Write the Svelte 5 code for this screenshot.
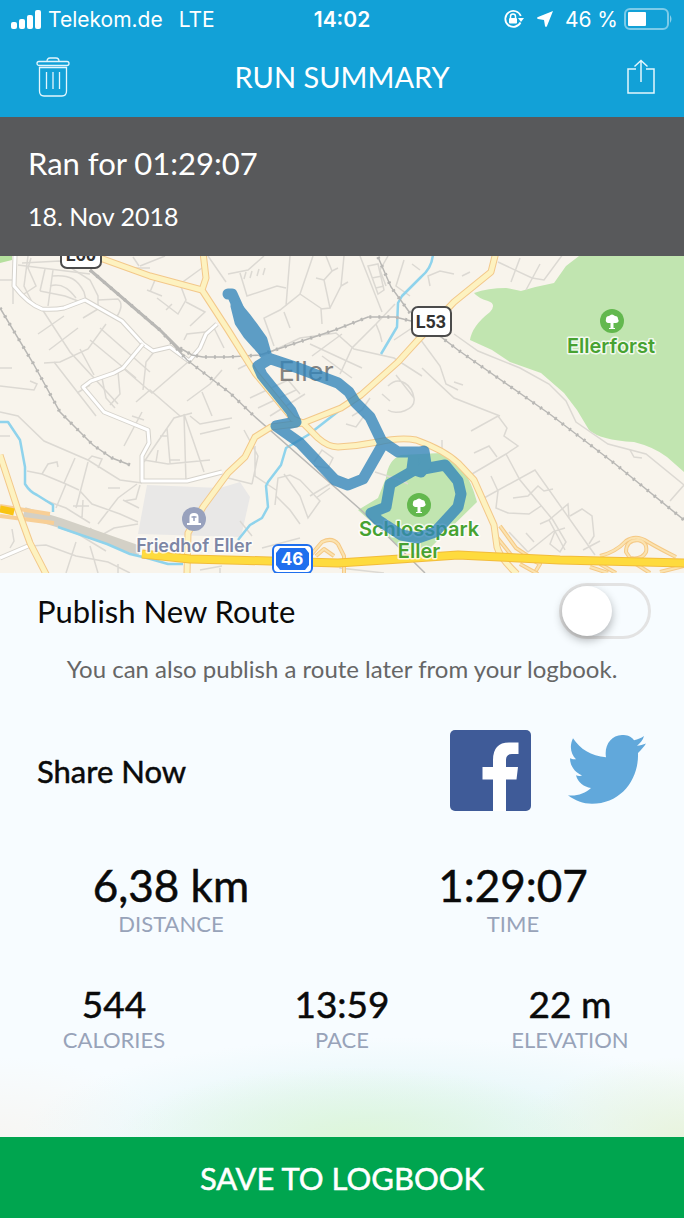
<script>
  let publishRoute = $state(false);

  const mainStats = [
    { value: '6,38 km', label: 'Distance' },
    { value: '1:29:07', label: 'Time' }
  ];

  const detailStats = [
    { value: '544', label: 'Calories' },
    { value: '13:59', label: 'Pace' },
    { value: '22 m', label: 'Elevation' }
  ];

  const streets = [
    // north west
    'M28 0L24 30L34 50M0 24H14M13 30V48M18 9L90 18M31 2L28 12L36 30L24 38M45 13L40 35M53 14L48 50M40 35L65 40L78 45',
    'M52 20C70 18 78 24 84 36L86 44M50 30C62 26 70 34 76 42M22 7L60 5L90 24L98 40V53L83 62M98 44L118 43C124 48 120 56 116 62',
    'M42 53L70 96L118 148M64 60L38 78M78 72L49 94M106 68L88 93L60 106L44 107M100 72L150 116M90 84L136 122M80 93L94 119',
    'M54 106L96 160M0 112H12M0 130L34 134L37 128L30 125M77 137L90 129M102 122L106 142L115 152M118 116L120 138L110 149',
    'M123 112L152 137L188 106M136 146L150 134L180 160M154 96L146 106L143 134M187 145L210 128L222 114M202 136L212 160',
    'M139 10L133 1M150 12L134 12M155 24L150 36M147 34L162 40M157 42L178 58L186 44L180 28L202 12M172 48L166 54M186 46L205 56L190 70',
    'M217 68L205 76L187 78L184 84M214 72L224 92M208 0L226 26M165 0L140 10',
    // centre
    'M228 18L248 14L264 0M240 17L247 40L277 30L286 32M246 16L244 23M252 15L250 22M259 13L257 20M265 12L263 19M290 0L286 50M313 0L300 38L280 54L264 62L274 90',
    'M326 0L332 15L324 24L330 52L321 53L322 68M344 0L341 30L330 52M300 38L322 53M332 15L338 12M324 24L316 22M341 30L348 26M284 56L290 72',
    'M360 0L382 56M368 10L378 8L384 34L378 38ZM372 22L382 20M376 32L384 30M388 0L380 14L386 30M404 4L396 30L410 40M412 8L420 14M430 30L428 20L440 15L454 18M395 48L376 68L352 92L340 118M376 68L380 78L382 86',
    'M262 100L300 82L336 77L354 93L394 102L422 120M310 88L362 112M322 100L352 122M342 78L312 100M422 112L454 142L500 160M394 84L412 72L440 110L446 128L458 134',
    'M250 142L288 124L300 138M258 152L296 134M270 160L305 138M396 119L414 142M388 130C400 118 412 130 414 142S396 160 388 154M382 138L390 145M370 142L362 154L352 160M238 113L250 107',
    // west and south west
    'M0 156L18 160L44 185L88 204L120 224L142 227M0 180H10M88 204L92 200L102 203L98 212M27 215L42 218L66 228L79 234M42 218L48 208L57 206L58 211M66 228L56 252M75 202L64 227M88 206L76 252',
    'M80 235L92 248L120 258L138 266M44 244L66 252L90 267M98 268L118 242L137 228M108 232L120 232M123 244L139 252M140 229L136 243L124 245M73 250H89M90 272L100 280L114 272L138 268M82 262L83 244',
    'M142 156L124 190M132 160L144 164M167 172L170 207M160 180H168M158 194L156 206M144 204L168 208L210 204M170 204H180M184 158L204 216M190 160L200 168L232 162M200 178L230 171M184 158L186 226M144 206L152 194L174 162L192 157',
    'M76 286L66 317M90 290L98 317M12 273L14 285L10 292M0 302L30 288M30 290L46 289L76 300L108 306L130 317M118 308V317M200 314L222 310M60 272L78 278L106 295M220 312V317',
    // south
    'M275 249L278 222L290 219L300 224L320 245L308 262L300 240L284 218M276 240L290 254L300 268M316 242L330 232M255 190V220L276 234M228 222L252 228M244 174L258 200L252 228M314 206L322 194L333 202L328 212L314 210M346 168L356 171L364 160M375 216L400 224L408 228M442 196V184',
    'M262 292L300 282M240 265L252 280M310 240L330 228M340 305V312L384 317',
    // east
    'M471 175L498 160L507 172L504 180L518 190L506 198L472 218M474 197L489 190L497 201M506 198L520 224L553 264L566 286L560 296L550 288L555 275L565 272M484 242L535 214L595 299M491 220L498 235L496 252L508 257L529 258L541 250',
    'M513 242L528 240L538 230L544 235L553 233M549 264L568 248L569 262M570 260L582 253L592 260L594 280L589 288M526 277L534 286M528 296L554 275M540 268L549 264L565 294M509 276L528 296M583 294L600 285',
    'M498 6L532 22L544 24L566 -6M520 2L511 26M540 8L526 34M454 78L478 95L520 112L549 128L566 145L576 166L608 188L646 198L684 229L670 245M630 194L634 201L642 202M470 16L462 20M454 126L463 129'
  ];

  const mainStreets = [
    'M15 0L14 30Q28 48 42 53Q54 54 64 52L85 44L122 65L143 88L153 95L170 91L189 105L200 92L206 78L217 68',
    'M143 88L123 112L114 117L91 125L83 131L104 156L148 174L149 187L142 200V225H187L222 216',
    'M0 302L28 290'
  ];

  const arterials = [
    'M100 2L150 20L202 34',
    'M203 -4L206 22L202 34L228 74L255 117L293 163L303 167L318 182Q328 191 338 191Q358 190 378 186Q401 181 416 184Q444 194 458 207L474 224L494 269L497 291Q500 302 517 318',
    'M496 -4L491 16L454 46L418 84L398 106L361 139L341 152L303 167L271 171L255 181L245 201L228 217L203 251L188 277L187 318',
    'M0 199L18 254L30 287L47 320'
  ];

  const ramps = [
    'M310 300L322 286Q332 281 338 288L344 300V318M316 300L324 293L334 300M500 270L516 292L528 300M496 280L512 300M530 303L540 308L534 318',
    'M600 300Q616 296 626 285Q636 278 648 286Q658 292 676 301M626 296Q626 284 638 284Q648 286 646 296Q642 304 630 302ZM590 311L608 317M600 308L616 317M636 308L650 317M684 310L660 316M520 308L538 318'
  ];

  const rivers = [
    'M0 166H8L20 184L25 211V228Q30 236 37 239L53 249V256M58 271L107 288L130 298L147 302L168 308H183',
    'M433 -2Q432 12 421 21L402 40L398 47L397 71L381 98M340 154L308 179L286 192L281 209L268 226L266 230L268 251L262 262L250 269L238 284'
  ];

  const railways = [
    'M90 14L160 74L187 104L230 137L253 159',
    'M180 92L192 99L203 101H228L260 99L335 74L368 61H395L415 66L441 81L458 94L551 159L614 207L684 264',
    'M378 1L391 31L410 57',
    'M0 52L33 107L60 156L93 189L112 202L130 209'
  ];
</script>

<svelte:head>
  <title>Run Summary</title>
</svelte:head>

{#snippet stat(item)}
  <div class="stat">
    <dt>{item.label}</dt>
    <dd>{item.value}</dd>
  </div>
{/snippet}

{#snippet tree(x, y)}
  <g transform="translate({x} {y})">
    <circle r="12" fill="#63b84e" />
    <path d="M-1.500 7V2L-4 2Q-7 1-6-2Q-6-5-3-5Q0-8 3-5Q6-5 6-2Q8 1 4 2L1.500 2V7H3V8H-3V7Z" fill="#fff" />
  </g>
{/snippet}

<div class="screen">
  <header class="top">
    <div class="status">
      <div class="status-left">
        <svg class="signal" viewBox="0 0 31 19" aria-hidden="true">
          <rect x="0" y="12" width="6" height="7" rx="2" />
          <rect x="8" y="9" width="6" height="10" rx="2" />
          <rect x="16" y="5" width="6" height="14" rx="2" />
          <rect x="24" y="0" width="6" height="19" rx="2" />
        </svg>
        <span>Telekom.de</span>
        <span class="network">LTE</span>
      </div>
      <span class="clock">14:02</span>
      <div class="status-right">
        <svg class="lock" viewBox="0 0 22 20" aria-hidden="true">
          <path d="M17.500 13.500A8 8 0 1 1 17.800 7" fill="none" stroke="#fff" stroke-width="1.800" />
          <path d="M15 9H21L18 13Z" />
          <rect x="6" y="9" width="8" height="5.500" rx="1" />
          <path d="M7.500 9V7.500a2.500 2.500 0 0 1 5 0V9" fill="none" stroke="#fff" stroke-width="1.500" />
        </svg>
        <svg class="arrow" viewBox="0 0 18 18" aria-hidden="true">
          <path d="M17 1L11 16Q10 18 9 16L8 10L2 9Q0 8 2 7Z" />
        </svg>
        <span>46 %</span>
        <svg class="battery" viewBox="0 0 49 22" aria-hidden="true">
          <rect x="1" y="1" width="43" height="20" rx="5" fill="none" stroke="#fff" stroke-opacity="0.45" stroke-width="2" />
          <rect x="4" y="4" width="18" height="14" rx="1" />
          <path d="M46 7Q49 11 46 15Z" fill-opacity="0.5" />
        </svg>
      </div>
    </div>

    <nav class="navbar">
      <button class="icon-btn trash-btn" aria-label="Delete run">
        <svg width="34" height="40" viewBox="0 0 34 40" fill="none" stroke="currentColor" stroke-width="1.300">
          <rect x="1" y="4.500" width="32" height="4" rx="2" />
          <path d="M11 4.500Q11 1 14 1H20Q23 1 23 4.500" />
          <path d="M3.500 10.500H30.500V34Q30.500 39 26 39H8Q3.500 39 3.500 34Z" />
          <path d="M10.500 15V32M17 15V32M23.500 15V32" />
        </svg>
      </button>
      <h1>RUN SUMMARY</h1>
      <button class="icon-btn share-btn" aria-label="Share run">
        <svg width="28" height="35" viewBox="0 0 28 35" fill="none" stroke="currentColor" stroke-width="1.500">
          <path d="M9 10H1V34H27V10H19" />
          <path d="M14 23V1.500M7.500 7.500L14 1.500L20.500 7.500" />
        </svg>
      </button>
    </nav>
  </header>

  <section class="headline">
    <h2>Ran for 01:29:07</h2>
    <p>18. Nov 2018</p>
  </section>

  <svg class="map" viewBox="0 0 684 317" role="img" aria-label="Map of the run through Eller">
    <rect width="684" height="317" fill="#f8f4ec" />
    <path d="M0 0H12V4L0 7Z" fill="#b5e09e" />
    <path d="M579 0L566 10L554 27Q538 30 521 35Q512 33 506 32Q488 32 474 37Q478 42 488 45Q497 48 490 56Q472 70 470 84L492 94L510 106L541 117L564 137L577 154L589 174Q600 184 634 186Q654 191 667 201L684 216V0Z" fill="#c1e5b0" />
    <path d="M358 254L378 242L386 222Q388 204 401 199L441 197Q466 205 477 246L428 294H403Z" fill="#c1e5b0" />
    <path d="M147 229L220 232L240 226L250 241L241 281L138 278Z" fill="#e9e8e7" />

    <g fill="none" stroke="#dcd9d3" stroke-width="1.500">
      {#each streets as d}
        <path {d} />
      {/each}
    </g>

    <path d="M24 256L60 267L140 295" fill="none" stroke="#d3d0c6" stroke-width="10" />

    <g fill="none" stroke="#8fd3ec" stroke-width="2.500" stroke-linejoin="round">
      {#each rivers as d}
        <path {d} />
      {/each}
    </g>

    <g fill="none" stroke-linejoin="round">
      {#each mainStreets as d}
        <path {d} stroke="#d6d3cc" stroke-width="5" />
        <path {d} stroke="#fff" stroke-width="3" />
      {/each}
    </g>

    <g fill="none" stroke="#b9b8b5">
      {#each railways as d}
        <path {d} stroke-width="1.500" />
        <path {d} stroke-width="3.500" stroke-dasharray="2 7" />
      {/each}
      <path d="M90 14L160 74L182 96" stroke-width="3" />
      <path d="M253 159L361 254L425 317" stroke-width="1.500" />
    </g>

    <g fill="none" stroke-linejoin="round">
      {#each ramps as d}
        <path {d} stroke="#f5c986" stroke-width="4" />
        <path {d} stroke="#fbe3b0" stroke-width="2" />
      {/each}
      <path d="M0 250L50 258M0 260L54 267" stroke="#f8cf96" stroke-width="4" />
      {#each arterials as d}
        <path {d} stroke="#f3c88a" stroke-width="7" />
      {/each}
      {#each arterials as d}
        <path {d} stroke="#fdf2c0" stroke-width="5" />
      {/each}
      <path d="M0 253L14 256" stroke="#f9c413" stroke-width="7" />
      <path d="M142 298L190 303L270 305L338 307L400 303L458 299L560 304L684 307" stroke="#f2bc3b" stroke-width="9" />
      <path d="M142 298L190 303L270 305L338 307L400 303L458 299L560 304L684 307" stroke="#fedb3e" stroke-width="7" />
    </g>

    <g class="label town">
      <text x="306" y="125">Eller</text>
    </g>
    <g class="label park">
      <text x="611" y="97">Ellerforst</text>
      <text x="419" y="280">Schlosspark</text>
      <text x="419" y="302">Eller</text>
    </g>
    <text class="label cemetery" x="194" y="296">Friedhof Eller</text>

    {@render tree(612, 65)}
    {@render tree(419, 249)}
    <g transform="translate(194 263)">
      <circle r="12" fill="#98a1bd" />
      <path d="M-4.500 4V-2Q-4.500-6 0-6Q4.500-6 4.500-2V4H7V6H-7V4Z" fill="#fff" />
      <path d="M-2.500-2H2.500M0-3V2" stroke="#98a1bd" stroke-width="1.500" />
    </g>

    <g class="shield">
      <rect x="61" y="-16" width="40" height="28" rx="6" />
      <text x="81" y="5">L60</text>
      <rect x="412" y="51" width="39" height="29" rx="6" />
      <text x="431" y="72">L53</text>
    </g>
    <g class="autobahn">
      <rect x="272" y="288" width="41" height="30" rx="6" fill="#1f6fee" />
      <rect x="274" y="290" width="37" height="26" rx="4" fill="#fff" />
      <path d="M280 292H305L309 297V309L305 314H280L276 309V297Z" fill="#1f6fee" />
      <text x="292" y="309">46</text>
    </g>

    <g class="route">
      <path
        d="M228 38L232 38L241 58L250 70L258 84L268 104L258 110L262 119L291 155L296 166L276 170L300 187L335 224L348 229L363 223L383 188L370 161L355 146L349 136L338 127L298 112L268 102M383 186L398 196L418 196L424 198L418 212L390 228L386 251L371 257L378 264L401 279L418 282L435 276L458 251L461 238L458 225L445 209L418 214"
      />
      <path d="M236 50L246 62L252 70L262 84L266 98L257 88L248 78L240 66ZM414 198L424 195L426 208L421 216L412 213Z" />
    </g>
  </svg>

  <main class="content">
    <div class="row">
      <label for="publish">Publish New Route</label>
      <input id="publish" type="checkbox" role="switch" bind:checked={publishRoute} />
    </div>
    <p class="hint">You can also publish a route later from your logbook.</p>

    <div class="row share">
      <h3>Share Now</h3>
      <div class="networks">
        <button class="icon-btn" aria-label="Share on Facebook">
          <svg width="81" height="81" viewBox="0 0 81 81">
            <rect width="81" height="81" rx="5" fill="#3f5b98" />
            <path d="M43 81V49.500H32.500V37H43V30Q43 12.500 59 12.500H68.500V24H62Q56 24 56 30V37H68L66.500 49.500H56V81Z" fill="#fff" />
          </svg>
        </button>
        <button class="icon-btn" aria-label="Share on Twitter">
          <svg width="80" height="74" viewBox="0 0 80 70" preserveAspectRatio="none">
            <path
              d="M39 22C24 21 13 14 6 4C2 12 4 19 9 24C7 24 5 24 3 23C3 31 9 37 15 39C14 40 11 40 9 39C11 46 17 50 24 51C18 56 10 59 1 58C8 63 16 66 25 66C54 66 72 43 71 18C74 15 77 12 79 9C76 10 73 11 70 11C73 9 76 6 77 2C74 4 71 5 67 6C64 2 60 1 55 1C44 1 37 11 39 22Z"
              fill="#61a8db"
            />
          </svg>
        </button>
      </div>
    </div>

    <dl class="stats main-stats">
      {#each mainStats as item}
        {@render stat(item)}
      {/each}
    </dl>
    <dl class="stats">
      {#each detailStats as item}
        {@render stat(item)}
      {/each}
    </dl>
  </main>

  <button class="save-btn">SAVE TO LOGBOOK</button>
</div>

<style>
  :global(body) {
    margin: 0;
  }

  .screen {
    display: flex;
    flex-direction: column;
    min-height: 100vh;
    font-family: Lato, sans-serif;
    color: #0a0a0a;
    background: #f7fcff;
  }

  h1, h2, h3, p, dl, dd {
    margin: 0;
    font-weight: 400;
  }

  .top {
    background: #12a1d7;
    color: #fff;
  }

  .status {
    display: grid;
    grid-template-columns: 1fr auto 1fr;
    align-items: center;
    height: 38px;
    padding: 0 11px;
    font-family: Inter, sans-serif;
    font-size: 21px;
    fill: #fff;
  }

  .status-left,
  .status-right {
    display: flex;
    align-items: center;
    gap: 6px;
  }

  .status-right {
    justify-content: flex-end;
  }

  .network {
    margin-left: 10px;
  }

  .clock {
    font-weight: 600;
  }

  .signal {
    width: 31px;
    height: 19px;
  }

  .lock {
    width: 22px;
    height: 20px;
  }

  .arrow {
    width: 18px;
    height: 18px;
    margin: 0 5px;
  }

  .battery {
    width: 49px;
    height: 22px;
  }

  .navbar {
    display: grid;
    grid-template-columns: 1fr auto 1fr;
    align-items: center;
    height: 77px;
    padding: 0 29px 2px;
  }

  .navbar h1 {
    font-size: 29px;
  }

  .icon-btn {
    display: flex;
    padding: 0;
    border: none;
    background: none;
    color: #e4f6fd;
    cursor: pointer;
  }

  .trash-btn {
    padding-left: 7px;
  }

  .share-btn {
    justify-self: end;
  }

  .headline {
    padding: 26px 28px 24px;
    background: #58595b;
    color: #fff;
  }

  .headline h2 {
    font-size: 31px;
    line-height: 40px;
  }

  .headline p {
    margin-top: 17px;
    font-size: 25px;
    line-height: 32px;
  }

  .map {
    display: block;
    width: 100%;
    height: auto;
  }

  .label {
    font-family: Inter, sans-serif;
    font-weight: 600;
    font-size: 20px;
    text-anchor: middle;
    stroke: #fff;
    stroke-width: 3px;
    stroke-opacity: 0.8;
    stroke-linejoin: round;
    paint-order: stroke;
  }

  .town {
    font-size: 27px;
    font-weight: 400;
    fill: #86837f;
    stroke: none;
  }

  .park {
    fill: #47a231;
  }

  .cemetery {
    font-size: 18px;
    fill: #7d86a5;
  }

  .shield {
    font-family: Roboto, sans-serif;
    font-weight: 700;
    font-size: 18px;
    text-anchor: middle;
  }

  .shield rect {
    fill: #fff;
    stroke: #4b4b4b;
    stroke-width: 2px;
  }

  .shield text {
    fill: #333;
  }

  .autobahn text {
    font-family: Inter, sans-serif;
    font-weight: 700;
    font-size: 17px;
    text-anchor: middle;
    fill: #fff;
  }

  .route {
    opacity: 0.78;
  }

  .route path {
    fill: none;
    stroke: #3285bb;
    stroke-width: 11px;
    stroke-linecap: round;
    stroke-linejoin: round;
  }

  .content {
    flex: 1;
    padding: 10px 0 32px;
    background:
      radial-gradient(ellipse 35% 70px at 52% 100%, #def6da, transparent),
      radial-gradient(ellipse 25% 80px at 100% 100%, #e8f4dd, transparent),
      radial-gradient(ellipse 55% 100px at 58% 100%, #dcf4f4, transparent),
      radial-gradient(ellipse 25% 80px at 0 100%, #f7f6f3, transparent),
      #f7fcff;
  }

  .row {
    display: flex;
    align-items: center;
    justify-content: space-between;
    padding: 0 33px 0 37px;
  }

  .row label,
  .row h3 {
    font-size: 31px;
    line-height: 40px;
  }

  .row h3,
  .stat dd,
  .save-btn {
    -webkit-text-stroke: 0.5px currentColor;
  }

  #publish {
    appearance: none;
    display: flex;
    align-items: center;
    box-sizing: border-box;
    width: 92px;
    height: 56px;
    margin: 0;
    border: 3px solid #e3e3e3;
    border-radius: 28px;
    cursor: pointer;
  }

  #publish::before {
    content: '';
    width: 50px;
    height: 50px;
    border-radius: 50%;
    background: #fff;
    box-shadow: 0 4px 10px rgba(0, 0, 0, 0.3);
    transition: transform 0.2s ease;
  }

  #publish:checked {
    background: #00a54f;
    border-color: #00a54f;
  }

  #publish:checked::before {
    transform: translateX(36px);
  }

  .hint {
    margin-top: 14px;
    font-size: 24px;
    line-height: 32px;
    text-align: center;
    color: #666;
  }

  .share {
    margin-top: 45px;
    padding-right: 37px;
  }

  .networks {
    display: flex;
    align-items: center;
    gap: 36px;
  }

  .stats {
    display: flex;
    margin-top: 44px;
  }

  .main-stats {
    margin-top: 47px;
  }

  .stat {
    display: flex;
    flex: 1;
    flex-direction: column-reverse;
    text-align: center;
  }

  .stat dd {
    font-size: 37px;
    line-height: 48px;
  }

  .main-stats dd {
    font-size: 44px;
    line-height: 54px;
  }

  .stat dt {
    font-size: 22px;
    line-height: 24px;
    text-transform: uppercase;
    color: #98a3b9;
  }

  .save-btn {
    height: 81px;
    border: none;
    background: #00a54f;
    color: #fff;
    font-family: inherit;
    font-size: 31px;
    cursor: pointer;
  }
</style>
